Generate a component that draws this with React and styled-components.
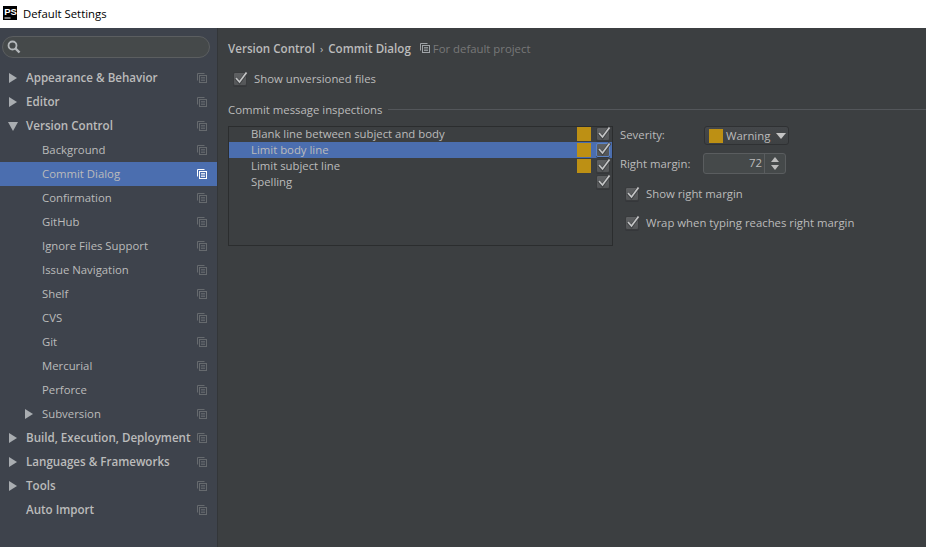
import React from 'react';
import styled, { createGlobalStyle } from 'styled-components';

const GlobalStyle = createGlobalStyle`
  html, body { margin: 0; padding: 0; height: 100%; overflow: hidden; background: #3c3f41; }
  #root { height: 100%; }
  * { box-sizing: border-box; }
`;

const Window = styled.div`
  width: 926px;
  height: 547px;
  display: flex;
  flex-direction: column;
  font-family: "Open Sans", "Noto Sans", sans-serif;
  font-size: 11.35px;
  color: #bbbbbb;
  overflow: hidden;
`;

const TitleBar = styled.div`
  height: 28px;
  flex: none;
  background: #ffffff;
  display: flex;
  align-items: center;
  padding: 0 0 2px 3px;
  gap: 6px;
  color: #000;
`;

const Body = styled.div`
  flex: 1;
  display: flex;
  min-height: 0;
`;

const Sidebar = styled.div`
  width: 218px;
  flex: none;
  background: #3e434c;
  border-right: 1px solid #333639;
  padding-top: 8px;
`;

const Search = styled.div`
  height: 22px;
  width: 208px;
  margin: 0 0 8px 2px;
  border: 1px solid #5b5e60;
  border-radius: 11px;
  background: #45494a;
  display: flex;
  align-items: center;
  padding-left: 4px;
`;

const Row = styled.div`
  height: 24px;
  display: flex;
  align-items: center;
  padding: 0 0 2px ${p => (p.$child ? 42 : 26)}px;
  position: relative;
  background: ${p => (p.$selected ? '#4b6eaf' : 'transparent')};
  font-weight: ${p => (p.$top ? 600 : 400)};
  font-size: ${p => (p.$top ? '11.6px' : 'inherit')};
`;

const Arrow = styled.span`
  position: absolute;
  left: ${p => (p.$child ? 25 : 9)}px;
  top: 7px;
  width: 0;
  height: 0;
  ${p => (p.$open
    ? `border-left: 5px solid transparent; border-right: 5px solid transparent; border-top: 9px solid #a9adb1; margin-top: 1px; left: 8px;`
    : `border-top: 5px solid transparent; border-bottom: 5px solid transparent; border-left: 8px solid #a9adb1;`)}
`;

const CopyWrap = styled.span`
  position: absolute;
  right: 10px;
  top: 7px;
  display: flex;
`;

const Main = styled.div`
  flex: 1;
  min-width: 0;
  padding: 12px 0 0 10px;
`;

const Crumbs = styled.div`
  display: flex;
  align-items: center;
  height: 16px;
  font-weight: 600;
  font-size: 11.6px;
`;

const Sep = styled.span`
  font-weight: 400;
  margin: 0 5px 0 5px;
  font-size: 11px;
`;

const Scope = styled.span`
  display: flex;
  align-items: center;
  gap: 3px;
  margin-left: 9px;
  font-weight: 400;
  font-size: 11.35px;
  color: #787878;
`;

const CheckRow = styled.div`
  display: flex;
  align-items: center;
  gap: 7px;
  height: 16px;
  margin: ${p => p.$margin || '0'};
`;

const CheckLabel = styled.span`
  margin-bottom: 2px;
`;

const Box = styled.span`
  width: 14px;
  height: 14px;
  flex: none;
  border-radius: 2px;
  background: linear-gradient(#5e6062, #545658);
  border: 1px solid ${p => (p.$focus ? '#5d83c4' : '#393b3d')};
  box-shadow: 0 1px 0 #35373a;
  position: relative;
`;

const GroupTitle = styled.div`
  display: flex;
  align-items: center;
  gap: 6px;
  height: 16px;
  margin-top: 14px;
  &::after {
    content: "";
    flex: 1;
    height: 1px;
    background: #53565a;
  }
`;

const Columns = styled.div`
  display: flex;
  margin-top: 9px;
`;

const List = styled.div`
  width: 385px;
  height: 120px;
  flex: none;
  border: 1px solid #2b2d2e;
`;

const ListRow = styled.div`
  height: 16px;
  display: flex;
  align-items: center;
  padding: 0 2px 0 22px;
  background: ${p => (p.$selected ? '#4b6eaf' : 'transparent')};
  &:first-child { margin-top: -1px; }
`;

const ListLabel = styled.span`
  flex: 1;
  margin-bottom: 2px;
`;

const Swatch = styled.span`
  width: 14px;
  height: 14px;
  flex: none;
  background: #bd9014;
  visibility: ${p => (p.$hidden ? 'hidden' : 'visible')};
  margin-right: ${p => p.$gap || 0}px;
`;

const Options = styled.div`
  margin-left: 7px;
  flex: 1;
`;

const FieldRow = styled.div`
  display: flex;
  align-items: center;
  height: ${p => p.$height || 20}px;
  margin-top: ${p => p.$top || 0}px;
`;

const FieldLabel = styled.span`
  width: 83px;
  flex: none;
`;

const Combo = styled.div`
  width: 85px;
  height: 19px;
  margin: -1px 0 0 1px;
  border: 1px solid #2f3133;
  border-radius: 3px;
  background: linear-gradient(#44474a, #3e4143);
  display: flex;
  align-items: center;
  padding-left: 4px;
  gap: 3px;
`;

const ComboText = styled.span`
  margin-bottom: 1px;
`;

const ComboArrow = styled.span`
  width: 0;
  height: 0;
  margin-left: 3px;
  border-left: 5px solid transparent;
  border-right: 5px solid transparent;
  border-top: 6px solid #c4c4c4;
`;

const SeverityLabel = styled(FieldLabel)`
  margin-bottom: 3px;
`;

const Spinner = styled.div`
  width: 83px;
  height: 21px;
  border: 1px solid #5a5d5f;
  border-radius: 3px;
  background: #45494a;
  display: flex;
`;

const SpinValue = styled.div`
  flex: 1;
  text-align: right;
  padding-right: 2px;
  line-height: 18px;
  border-right: 1px solid #5a5d5f;
`;

const SpinArrows = styled.div`
  width: 20px;
  display: flex;
  flex-direction: column;
  align-items: center;
  justify-content: center;
  gap: 3px;
`;

const SpinUp = styled.span`
  width: 0;
  height: 0;
  border-left: 4px solid transparent;
  border-right: 4px solid transparent;
  border-bottom: 5px solid #bbbbbb;
`;

const SpinDown = styled(SpinUp)`
  border-bottom: 0;
  border-top: 5px solid #bbbbbb;
`;

const PsLogo = () => (
  <svg width="14" height="14" viewBox="0 0 14 14">
    <rect width="14" height="14" fill="#000" />
    <rect x="1.5" y="11.5" width="6" height="1" fill="#fff" />
    <text x="1.2" y="9.4" fontFamily="Liberation Sans, sans-serif" fontSize="9.5" fontWeight="700" fill="#fff">PS</text>
  </svg>
);

const SearchIcon = () => (
  <svg width="14" height="14" viewBox="0 0 14 14" fill="none" stroke="#b4b8bb">
    <circle cx="5.5" cy="5.5" r="4" strokeWidth="1.8" />
    <path d="M8.5 8.5l4 4" strokeWidth="2.4" />
  </svg>
);

const CopyIcon = ({ color = '#666a6e' }) => (
  <svg width="10" height="10" viewBox="0 0 10 10" fill="none" stroke={color}>
    <path d="M7.5 .5h-7v7" />
    <rect x="2.5" y="2.5" width="7" height="7" />
    <path d="M4 4.5h4M4 6h4M4 7.5h4" strokeWidth=".8" />
  </svg>
);

const TickSvg = styled.svg`
  position: absolute;
  left: -1px;
  top: -4px;
`;

const Tick = () => (
  <TickSvg width="17" height="17" viewBox="0 0 17 17" fill="none">
    <path d="M2.5 9l4 4.5L14 3" stroke="#414345" strokeWidth="3.2" />
    <path d="M3 9l3.5 4L13.5 3.5" stroke="#c4c5c6" strokeWidth="1.7" />
  </TickSvg>
);

const Check = ({ focus }) => (
  <Box $focus={focus}><Tick /></Box>
);

const tree = [
  { label: 'Appearance & Behavior', top: true, arrow: true },
  { label: 'Editor', top: true, arrow: true },
  { label: 'Version Control', top: true, arrow: true, open: true },
  { label: 'Background', child: true },
  { label: 'Commit Dialog', child: true, selected: true },
  { label: 'Confirmation', child: true },
  { label: 'GitHub', child: true },
  { label: 'Ignore Files Support', child: true },
  { label: 'Issue Navigation', child: true },
  { label: 'Shelf', child: true },
  { label: 'CVS', child: true },
  { label: 'Git', child: true },
  { label: 'Mercurial', child: true },
  { label: 'Perforce', child: true },
  { label: 'Subversion', child: true, arrow: true },
  { label: 'Build, Execution, Deployment', top: true, arrow: true },
  { label: 'Languages & Frameworks', top: true, arrow: true },
  { label: 'Tools', top: true, arrow: true },
  { label: 'Auto Import', top: true },
];

const inspections = [
  { label: 'Blank line between subject and body', swatch: true },
  { label: 'Limit body line', swatch: true, selected: true },
  { label: 'Limit subject line', swatch: true },
  { label: 'Spelling' },
];

export default function App() {
  return (
    <Window>
      <GlobalStyle />
      <TitleBar><PsLogo />Default Settings</TitleBar>
      <Body>
        <Sidebar>
          <Search><SearchIcon /></Search>
          {tree.map(item => (
            <Row key={item.label} $child={item.child} $top={item.top} $selected={item.selected}>
              {item.arrow && <Arrow $child={item.child} $open={item.open} />}
              {item.label}
              <CopyWrap><CopyIcon color={item.selected ? '#ffffff' : undefined} /></CopyWrap>
            </Row>
          ))}
        </Sidebar>
        <Main>
          <Crumbs>
            Version Control<Sep>›</Sep>Commit Dialog
            <Scope><CopyIcon color="#a0a4a8" />For default project</Scope>
          </Crumbs>
          <CheckRow $margin="15px 0 0 5px"><Check /><CheckLabel>Show unversioned files</CheckLabel></CheckRow>
          <GroupTitle>Commit message inspections</GroupTitle>
          <Columns>
            <List>
              {inspections.map(row => (
                <ListRow key={row.label} $selected={row.selected}>
                  <ListLabel>{row.label}</ListLabel>
                  <Swatch $hidden={!row.swatch} $gap={5} />
                  <Check focus={row.selected} />
                </ListRow>
              ))}
            </List>
            <Options>
              <FieldRow>
                <SeverityLabel>Severity:</SeverityLabel>
                <Combo><Swatch /><ComboText>Warning</ComboText><ComboArrow /></Combo>
              </FieldRow>
              <FieldRow $top={7} $height={21}>
                <FieldLabel>Right margin:</FieldLabel>
                <Spinner>
                  <SpinValue>72</SpinValue>
                  <SpinArrows><SpinUp /><SpinDown /></SpinArrows>
                </Spinner>
              </FieldRow>
              <CheckRow $margin="12px 0 0 5px"><Check /><CheckLabel>Show right margin</CheckLabel></CheckRow>
              <CheckRow $margin="13px 0 0 5px"><Check /><CheckLabel>Wrap when typing reaches right margin</CheckLabel></CheckRow>
            </Options>
          </Columns>
        </Main>
      </Body>
    </Window>
  );
}
